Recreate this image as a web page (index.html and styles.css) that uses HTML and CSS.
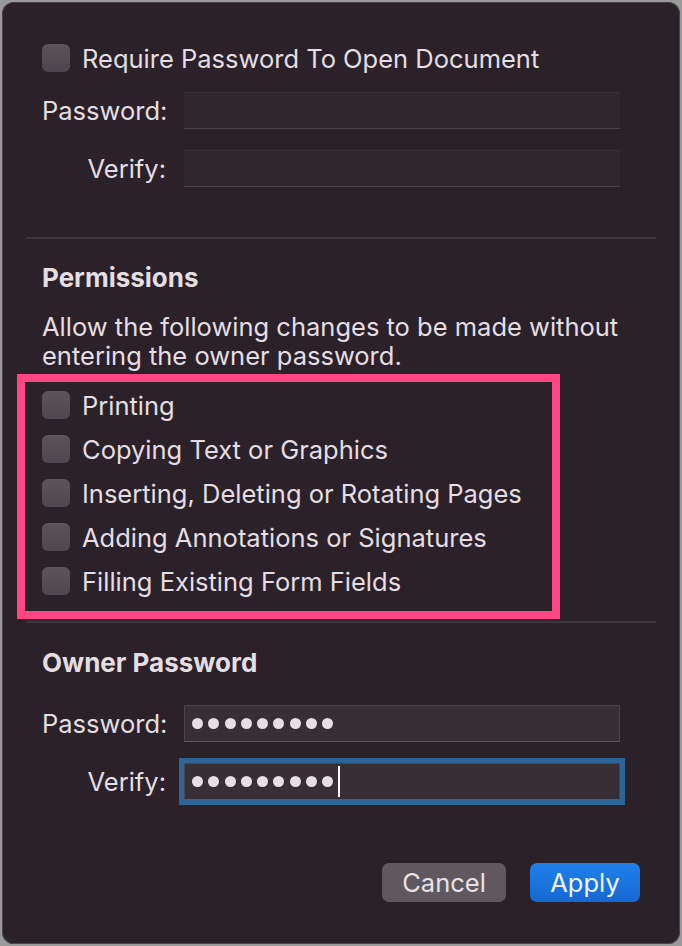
FILE: index.html
```html
<!DOCTYPE html>
<html lang="en">
<head>
    <meta charset="UTF-8">
    <meta name="viewport" content="width=device-width, initial-scale=1.0">
    <title>Security Options</title>
    <link rel="stylesheet" href="styles.css">
</head>
<body>
    <div class="window">
        <label class="check-row first">
            <span class="checkbox"></span>
            <span>Require Password To Open Document</span>
        </label>
        <div class="field-row">
            <span class="field-label">Password:</span>
            <div class="field"></div>
        </div>
        <div class="field-row verify">
            <span class="field-label">Verify:</span>
            <div class="field"></div>
        </div>

        <div class="separator"></div>

        <h2>Permissions</h2>
        <p class="note">Allow the following changes to be made without entering the owner password.</p>

        <div class="highlight">
            <label class="check-row"><span class="checkbox"></span><span>Printing</span></label>
            <label class="check-row"><span class="checkbox"></span><span>Copying Text or Graphics</span></label>
            <label class="check-row"><span class="checkbox"></span><span>Inserting, Deleting or Rotating Pages</span></label>
            <label class="check-row"><span class="checkbox"></span><span>Adding Annotations or Signatures</span></label>
            <label class="check-row"><span class="checkbox"></span><span>Filling Existing Form Fields</span></label>
        </div>

        <div class="separator second"></div>

        <h2 class="owner">Owner Password</h2>
        <div class="field-row owner-row">
            <span class="field-label">Password:</span>
            <div class="field filled">
                <span class="dot"></span><span class="dot"></span><span class="dot"></span>
                <span class="dot"></span><span class="dot"></span><span class="dot"></span>
                <span class="dot"></span><span class="dot"></span><span class="dot"></span>
            </div>
        </div>
        <div class="field-row verify">
            <span class="field-label">Verify:</span>
            <div class="field filled focused">
                <span class="dot"></span><span class="dot"></span><span class="dot"></span>
                <span class="dot"></span><span class="dot"></span><span class="dot"></span>
                <span class="dot"></span><span class="dot"></span><span class="dot"></span>
                <span class="caret"></span>
            </div>
        </div>

        <div class="buttons">
            <button class="cancel">Cancel</button>
            <button class="apply">Apply</button>
        </div>
    </div>
</body>
</html>
```

FILE: styles.css
```css
body {
    margin: 0;
    padding: 2px;
    background: #9a9a9a;
    font-family: Inter, "Noto Sans", sans-serif;
    color: #e3dee3;
}
.window {
    box-sizing: border-box;
    width: 678px;
    height: 942px;
    background: #2b2229;
    border-radius: 12px;
    box-shadow: inset 0 0 0 1px #4a444c;
    padding: 0 40px;
    overflow: hidden;
}
.check-row {
    display: flex;
    align-items: center;
    gap: 12px;
    height: 44px;
    font-size: 25.5px;
}
.check-row.first {
    height: 28px;
    padding-top: 42px;
}
.checkbox {
    width: 28px;
    height: 28px;
    border-radius: 6px;
    background: linear-gradient(#5c5459, #4d464e);
    flex-shrink: 0;
}
.field-row {
    display: flex;
    align-items: center;
    gap: 18px;
    margin-top: 20px;
}
.field-row.verify {
    margin-top: 21px;
}
.field-label {
    width: 124px;
    text-align: right;
    font-size: 25.5px;
}
.field {
    box-sizing: border-box;
    width: 436px;
    height: 37px;
    background: #30272f;
    border-top: 1px solid #3a323a;
    border-bottom: 1px solid #48414a;
    display: flex;
    align-items: center;
    gap: 5.25px;
    padding-left: 7px;
}
.field.filled {
    background: #372e36;
    border: 1px solid #4a434c;
    border-bottom-color: #5d575f;
}
.field.focused {
    box-shadow: 0 0 0 5px #2d6597;
}
.dot {
    width: 11px;
    height: 11px;
    border-radius: 50%;
    background: #e4e0e4;
}
.caret {
    width: 2px;
    height: 31px;
    background: #ffffff;
}
.separator {
    height: 2px;
    background: #3d363f;
    margin: 50px -16px 0;
}
.separator.second {
    margin-top: 2px;
}
h2 {
    font-size: 26px;
    font-weight: bold;
    line-height: 30px;
    margin: 24px 0 0;
}
h2.owner {
    margin-top: 25px;
}
.owner-row {
    margin-top: 27px;
}
.note {
    font-size: 25.5px;
    line-height: 29px;
    margin: 19px 0 0;
    width: 590px;
}
.highlight {
    border: 8px solid #ff4584;
    width: 510px;
    margin: 4px 0 0 -25px;
    padding: 1px 0 8px 17px;
}
.buttons {
    display: flex;
    justify-content: flex-end;
    gap: 24px;
    margin-top: 63px;
}
.buttons button {
    height: 39px;
    border: none;
    border-radius: 7px;
    font-family: Inter, "Noto Sans", sans-serif;
    font-size: 25.5px;
    padding: 0;
}
.cancel {
    width: 124px;
    background: #5f595f;
    color: #e6e2e6;
}
.apply {
    width: 110px;
    background: linear-gradient(#2080ea, #1668d2);
    color: #eef4ff;
}
```
